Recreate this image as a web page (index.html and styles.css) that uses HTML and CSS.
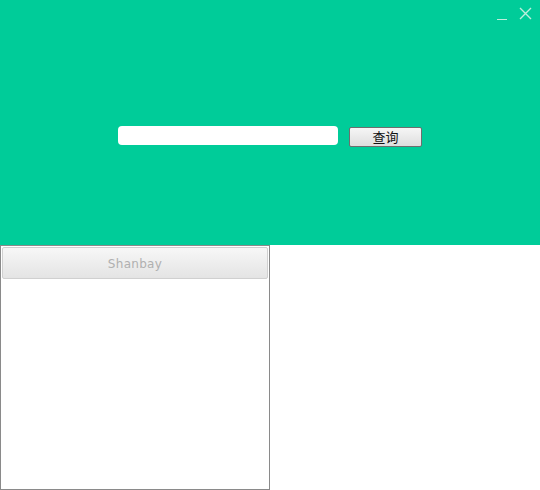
FILE: index.html
```html
<!DOCTYPE html>
<html>
<head>
<meta charset="utf-8">
<link rel="stylesheet" href="styles.css">
</head>
<body>
<div class="app">
  <header class="top">
    <div class="winctl">
      <span class="min"></span>
      <svg class="close" width="13" height="13" viewBox="0 0 13 13"><path d="M1 1L12 12M12 1L1 12" stroke="#bfeedd" stroke-width="1.4" fill="none"/></svg>
    </div>
    <div class="search">
      <input class="query" type="text">
      <button class="go">查询</button>
    </div>
  </header>
  <main class="bottom">
    <section class="left">
      <button class="tab">Shanbay</button>
    </section>
    <section class="right"></section>
  </main>
</div>
</body>
</html>
```

FILE: styles.css
```css
html, body { margin: 0; padding: 0; }
body { width: 540px; height: 490px; overflow: hidden; background: #fff; font-family: "DejaVu Sans", sans-serif; }
.app { display: flex; flex-direction: column; height: 490px; }
.top { position: relative; height: 245px; background: #00cc99; display: flex; align-items: center; justify-content: center; }
.winctl { position: absolute; top: 7px; right: 8px; display: flex; align-items: flex-end; gap: 12px; }
.min { width: 10px; height: 1px; background: #bfeedd; margin-bottom: 0; }
.close { display: block; }
.search { display: flex; align-items: center; gap: 11px; margin-top: 26px; }
.query { width: 220px; height: 19px; box-sizing: border-box; border: none; border-radius: 4px; background: #fff; padding: 0; margin: 0; outline: none; }
.go { width: 73px; height: 20px; box-sizing: border-box; margin: 0; padding: 0; margin-top: 2px; border: 1px solid #6e6e6e; border-radius: 2px; background: linear-gradient(#f6f6f6, #dedede); font-family: "Noto Sans CJK SC", sans-serif; font-weight: 400; font-size: 13px; line-height: 17px; color: #111; }
.bottom { flex: 1; display: flex; }
.left { width: 270px; box-sizing: border-box; border: 1px solid #8a8a8a; padding: 1px; display: flex; flex-direction: column; }
.tab { height: 32px; box-sizing: border-box; margin: 0; padding-top: 3px; border: 1px solid #d0d0d0; border-radius: 2px; background: linear-gradient(#f7f7f7, #e4e4e4); font-family: "DejaVu Sans", sans-serif; font-size: 12px; color: #b0b0b0; letter-spacing: 0.3px; }
.right { flex: 1; background: #fff; }
```
